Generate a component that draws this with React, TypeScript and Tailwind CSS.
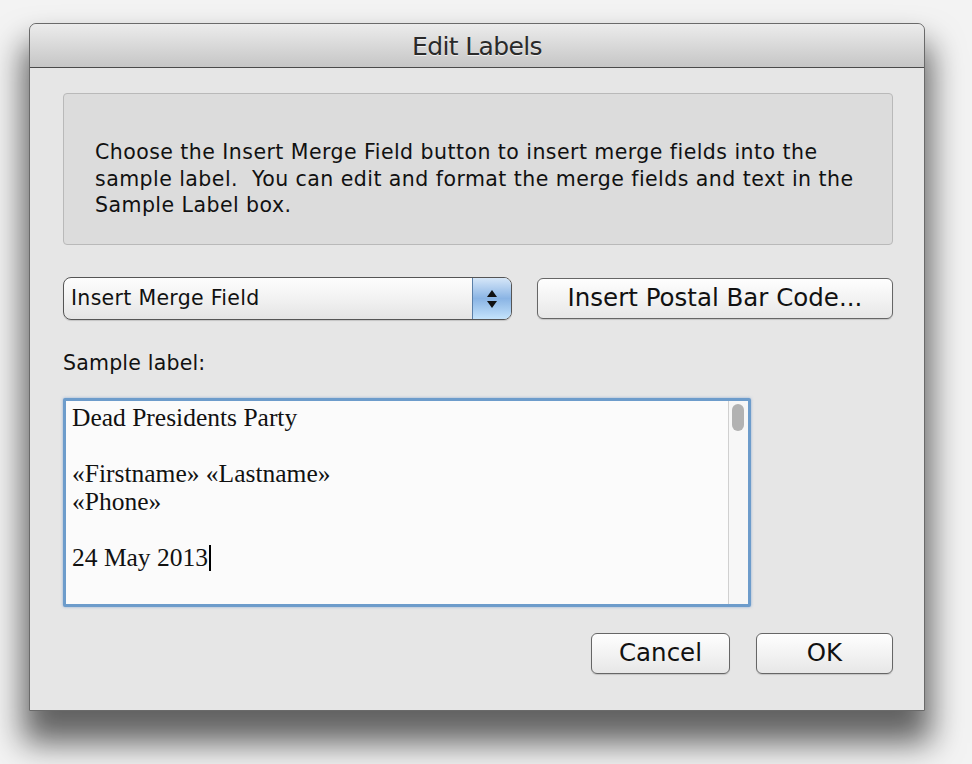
export default function App() {
  const ui = "font-['DejaVu_Sans',_'Liberation_Sans',_sans-serif]";

  return (
    <div className={`h-[764px] w-[972px] overflow-hidden bg-[#f3f3f3] pl-[29px] pt-[23px] ${ui}`}>
      <div className="flex h-[688px] w-[896px] flex-col rounded-t-[7px] border border-[#6a6a6a] bg-[#e6e6e6] shadow-[0_26px_32px_6px_rgba(0,0,0,0.6)]">
        {/* title bar */}
        <div className="flex h-[44px] shrink-0 items-center justify-center rounded-t-[7px] border-b border-[#4a4a4a] bg-gradient-to-b from-[#ececec] to-[#c6c6c6] pt-[3px]">
          <span className="text-[25px] tracking-tight text-[#2a2a2a] [text-shadow:0_1px_0_rgba(255,255,255,0.7)]">
            Edit Labels
          </span>
        </div>

        <div className="flex flex-1 flex-col pl-[33px] pr-[31px] pt-[25px]">
          {/* info box */}
          <div className="flex h-[152px] flex-col justify-center rounded-[4px] border border-[#b9b9b9] bg-[#dcdcdc] pl-[31px] pr-2 pt-[20px] text-[20.5px] leading-[26.5px] tracking-[0.45px] text-[#111]">
            <p>Choose the Insert Merge Field button to insert merge fields into the</p>
            <p>sample label.&nbsp; You can edit and format the merge fields and text in the</p>
            <p>Sample Label box.</p>
          </div>

          {/* buttons row */}
          <div className="mt-[32px] flex items-center gap-[25px]">
            <div className="flex h-[43px] w-[450px] overflow-hidden rounded-[8px] border border-[#555] bg-gradient-to-b from-[#fdfdfd] via-[#f2f2f2] to-[#e4e4e4] shadow-[0_1px_1px_rgba(0,0,0,0.15)]">
              <div className="flex flex-1 items-center pl-[7px] text-[20.5px] tracking-[0.3px] text-[#111]">Insert Merge Field</div>
              <div className="flex w-[39px] items-center justify-center border-l border-[#5a7fa8] bg-gradient-to-b from-[#d6e7f8] via-[#8ab4e4] to-[#c4e3fb]">
                <svg width="12" height="24" viewBox="0 0 12 24">
                  <path d="M6 3 L11 10 L1 10 Z" fill="#111" />
                  <path d="M6 21 L11 14 L1 14 Z" fill="#111" />
                </svg>
              </div>
            </div>
            <button className="flex h-[41px] w-[357px] items-center justify-center rounded-[6px] border border-[#666] bg-gradient-to-b from-[#fefefe] via-[#f3f3f3] to-[#e7e7e7] text-[24.5px] text-[#111] shadow-[0_1px_1px_rgba(0,0,0,0.15)]">
              Insert Postal Bar Code...
            </button>
          </div>

          <div className="mt-[28px] text-[20.5px] tracking-[0.2px] text-[#111]">Sample label:</div>

          {/* sample text area */}
          <div className="mt-[19px] flex h-[209px] w-[688px] rounded-[2px] border-[3px] border-[#6d9ccb] bg-[#fbfbfb] shadow-[0_0_3px_rgba(90,140,200,0.6)]">
            <div className="flex-1 pl-[6px] pt-[3px] font-['Liberation_Serif',_serif] text-[25.5px] leading-[28px] text-[#111]">
              <div>Dead Presidents Party</div>
              <div>&nbsp;</div>
              <div>«Firstname» «Lastname»</div>
              <div>«Phone»</div>
              <div>&nbsp;</div>
              <div className="flex items-center">
                24 May 2013<span className="ml-[1px] inline-block h-[26px] w-[2px] bg-black" />
              </div>
            </div>
            <div className="w-[20px] border-l border-[#d0d0d0] bg-[#f7f7f7] px-[3px] pt-[3px]">
              <div className="h-[27px] w-[12px] rounded-full bg-[#b2b2b2]" />
            </div>
          </div>

          {/* footer buttons */}
          <div className="mt-[26px] flex justify-end gap-[26px]">
            <button className="flex h-[41px] w-[139px] items-center justify-center rounded-[6px] border border-[#666] bg-gradient-to-b from-[#fefefe] via-[#f3f3f3] to-[#e7e7e7] text-[24.5px] text-[#111] shadow-[0_1px_1px_rgba(0,0,0,0.15)]">
              Cancel
            </button>
            <button className="flex h-[41px] w-[137px] items-center justify-center rounded-[6px] border border-[#666] bg-gradient-to-b from-[#fefefe] via-[#f3f3f3] to-[#e7e7e7] text-[24.5px] text-[#111] shadow-[0_1px_1px_rgba(0,0,0,0.15)]">
              OK
            </button>
          </div>
        </div>
      </div>
    </div>
  );
}
